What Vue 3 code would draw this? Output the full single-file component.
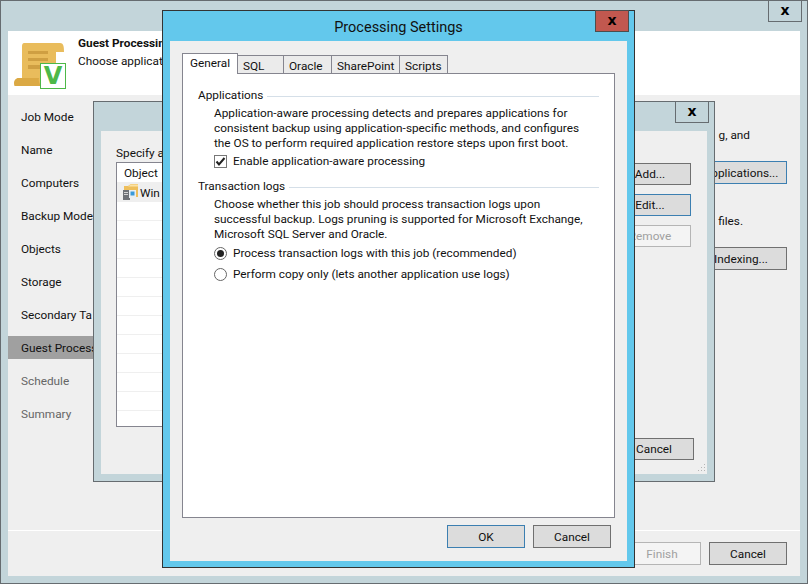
<script setup>
const steps = [
  { label: 'Job Mode' },
  { label: 'Name' },
  { label: 'Computers' },
  { label: 'Backup Mode' },
  { label: 'Objects' },
  { label: 'Storage' },
  { label: 'Secondary Ta' },
  { label: 'Guest Process', active: true },
  { label: 'Schedule', muted: true },
  { label: 'Summary', muted: true }
]
const tabs = [
  { label: 'General', w: 56, active: true },
  { label: 'SQL', w: 46 },
  { label: 'Oracle', w: 48 },
  { label: 'SharePoint', w: 68 },
  { label: 'Scripts', w: 48 }
]
const rows = 13
</script>

<template>
  <div class="desk">
    <div class="win outer">
      <div class="winbar"><span class="x">x</span></div>
      <div class="client">
        <header class="head">
          <div class="logo">
            <svg width="52" height="44" viewBox="0 0 52 44">
              <path d="M10 0H46C50 0 50 5 50 9H42V38C42 41 38 43 34 43H4C0 43 -1 37 4 35H8V3C8 1 9 0 10 0Z" fill="#e9bc5c"/>
              <path d="M0.5 43C-1 39 1 35 5 35H25C24 39 26 42 28 43Z" fill="#dba944"/>
              <path d="M14 8H34V11H14ZM14 15H34V18H14ZM14 22H30V26H14Z" fill="#cf9f42"/>
            </svg>
            <span class="vbadge">V</span>
          </div>
          <div class="headtext">
            <div class="headtitle">Guest Processin</div>
            <div>Choose applicat</div>
          </div>
        </header>
        <div class="mainrow">
          <nav class="nav">
            <div v-for="s in steps" :key="s.label" class="step" :class="{ on: s.active, muted: s.muted }">{{ s.label }}</div>
          </nav>
          <div class="pane">
            <div class="line1">g, and</div>
            <button class="btn focus wide">Applications...</button>
            <div class="line2">files.</div>
            <button class="btn wide">Indexing...</button>
          </div>
        </div>
        <footer class="foot">
          <button class="btn off fw">Finish</button>
          <button class="btn fw">Cancel</button>
        </footer>
      </div>
    </div>

    <div class="win middle">
      <div class="winbar"><span class="x mx">x</span></div>
      <div class="client midclient">
        <div class="midleft">
          <div class="spec">Specify a</div>
          <div class="list">
            <div class="lhead">Object</div>
            <div class="lrow first">
              <svg width="17" height="18" viewBox="0 0 17 18">
                <path d="M2 3H6L9 1H16V14H2Z" fill="#eebf5c"/>
                <path d="M6 3.5L9 1.5H16V3.5Z" fill="#fbe3a6"/>
                <rect x="1" y="7" width="7" height="10" fill="#6f7277"/>
                <rect x="7" y="7" width="7" height="8" fill="#e9eef2"/>
                <rect x="8.5" y="8.5" width="4" height="4" fill="#3a9ad9"/>
                <rect x="2" y="9" width="4" height="1" fill="#d5d5d5"/>
                <rect x="2" y="11" width="4" height="1" fill="#d5d5d5"/>
              </svg>
              <span class="win-label">Win</span>
            </div>
            <div v-for="n in rows" :key="n" class="lrow"></div>
          </div>
        </div>
        <div class="midbtns">
          <button class="btn mb">Add...</button>
          <button class="btn mb focus">Edit...</button>
          <button class="btn mb off">Remove</button>
        </div>
        <button class="btn mcancel">Cancel</button>
        <svg class="grip" width="9" height="9" viewBox="0 0 9 9">
          <path d="M7 0h1v1H7zM4 3h1v1H4zM7 3h1v1H7zM1 6h1v1H1zM4 6h1v1H4zM7 6h1v1H7z" fill="#b5b5b5"/>
        </svg>
      </div>
    </div>

    <div class="win top">
      <div class="topbar">
        <span class="toptitle">Processing Settings</span>
        <span class="x red">x</span>
      </div>
      <div class="topclient">
        <div class="tabs">
          <div v-for="t in tabs" :key="t.label" class="tab" :class="{ act: t.active }" :style="{ width: t.w + 'px' }">{{ t.label }}</div>
        </div>
        <div class="panel">
          <div class="group">Applications<i></i></div>
          <div class="copy">
            <p>Application-aware processing detects and prepares applications for</p>
            <p>consistent backup using application-specific methods, and configures</p>
            <p>the OS to perform required application restore steps upon first boot.</p>
          </div>
          <div class="opt chk">
            <svg class="box" width="13" height="13" viewBox="0 0 13 13">
              <rect x="0.5" y="0.5" width="12" height="12" fill="#fff" stroke="#777"/>
              <path d="M2.5 6.5L5 9.5L10.5 3" fill="none" stroke="#222" stroke-width="2"/>
            </svg>
            Enable application-aware processing
          </div>
          <div class="group g2">Transaction logs<i></i></div>
          <div class="copy c2">
            <p>Choose whether this job should process transaction logs upon</p>
            <p>successful backup. Logs pruning is supported for Microsoft Exchange,</p>
            <p>Microsoft SQL Server and Oracle.</p>
          </div>
          <div class="opt r1"><span class="radio sel"></span>Process transaction logs with this job (recommended)</div>
          <div class="opt r2"><span class="radio"></span>Perform copy only (lets another application use logs)</div>
        </div>
        <div class="topfoot">
          <button class="btn tb focus">OK</button>
          <button class="btn tb">Cancel</button>
        </div>
      </div>
    </div>
  </div>
</template>

<style>
html, body { margin: 0; padding: 0; }
</style>

<style scoped>
.desk {
  position: relative;
  width: 808px;
  height: 584px;
  overflow: hidden;
  font-family: Roboto, "Open Sans", sans-serif;
  font-size: 11.8px;
  color: #111;
}
.win {
  position: absolute;
  box-sizing: border-box;
  display: flex;
  flex-direction: column;
  background: #c3d5da;
  border: 1px solid #666c70;
}
.outer { left: 0; top: 0; width: 808px; height: 584px; padding: 0 7px 7px; }
.middle { left: 93px; top: 101px; width: 622px; height: 381px; padding: 0 7px 7px; }
.top { left: 162px; top: 10px; width: 473px; height: 558px; padding: 0 7px 6px; background: #63c8ec; border-color: #333; }
.winbar { height: 30px; flex: none; position: relative; }
.middle .winbar { height: 29px; }
.x {
  position: absolute;
  top: -1px;
  right: -2px;
  box-sizing: border-box;
  width: 34px;
  height: 22px;
  border: 1px solid #666c70;
  font: bold 14px/19px "DejaVu Sans", sans-serif;
  text-align: center;
  color: #000;
}
.client { flex: 1; display: flex; flex-direction: column; background: #efefef; min-height: 0; }
.head { height: 64px; flex: none; background: #fff; display: flex; }
.logo { position: relative; width: 70px; flex: none; }
.logo svg { position: absolute; left: 6px; top: 12px; }
.vbadge {
  position: absolute;
  left: 32px;
  top: 32px;
  box-sizing: border-box;
  width: 26px;
  height: 26px;
  background: #fff;
  border: 1px solid #4db848;
  color: #4db848;
  font: bold 24px/25px "DejaVu Sans", sans-serif;
  text-align: center;
}
.headtext { padding-top: 3px; line-height: 18px; white-space: nowrap; }
.headtitle { font-weight: 700; }
.mainrow { flex: 1; display: flex; min-height: 0; }
.nav { width: 85px; flex: none; padding-top: 10px; }
.step { height: 23px; line-height: 25px; margin-bottom: 10px; padding-left: 13px; white-space: nowrap; }
.step.on { background: #a0a0a0; }
.step.muted { color: #666; }
.pane { flex: 1; display: flex; flex-direction: column; align-items: flex-end; padding-right: 13px; }
.line1 { margin-top: 31px; height: 18px; line-height: 18px; padding-right: 37px; }
.line2 { margin-top: 28px; height: 18px; line-height: 18px; padding-right: 44px; }
.foot {
  height: 46px;
  flex: none;
  box-sizing: border-box;
  border-top: 1px solid #fff;
  display: flex;
  justify-content: flex-end;
  gap: 8px;
  padding: 11px 13px 0;
}
.btn {
  box-sizing: border-box;
  height: 23px;
  padding: 0;
  border: 1px solid #707070;
  background: #dcdcdc;
  font: inherit;
  color: #111;
  white-space: nowrap;
}
.focus { border-color: #3c7fb1; }
.off { background: #f4f4f4; border-color: #b5b5b5; color: #a0a0a0; }
.wide { width: 96px; margin-top: 17px; padding-left: 4px; }
.fw { width: 78px; }
.midclient { position: relative; flex-direction: row; }
.midleft { flex: 1; padding: 12px 0 0 15px; min-width: 0; }
.spec { height: 19px; line-height: 21px; white-space: nowrap; }
.list { width: 470px; height: 265px; box-sizing: border-box; border: 1px solid #85858f; background: #fff; overflow: hidden; }
.lhead { height: 19px; line-height: 21px; padding-left: 7px; background: #fff; }
.lrow { height: 19px; box-sizing: border-box; border-bottom: 1px solid #efefef; display: flex; align-items: center; gap: 1px; }
.lrow.first { height: 20px; background: #efefef; padding-left: 5px; }
.win-label { padding-top: 2px; }
.midbtns { width: 82px; flex: none; display: flex; flex-direction: column; gap: 9px; padding: 32px 16px 0 0; }
.mb { width: 82px; height: 22px; }
.mcancel { position: absolute; right: 13px; bottom: 14px; width: 80px; height: 22px; }
.grip { position: absolute; right: 1px; bottom: 1px; }
.topbar { height: 30px; flex: none; position: relative; text-align: center; }
.toptitle { font-size: 14.5px; line-height: 33px; color: #111; }
.red { background: #c1584f; border-color: #4d4d4d; }
.topclient { flex: 1; display: flex; flex-direction: column; background: #efefef; padding: 12px 12px 0; min-height: 0; }
.tabs { display: flex; align-items: flex-end; height: 20px; flex: none; position: relative; z-index: 1; }
.tab {
  box-sizing: border-box;
  height: 18px;
  border: 1px solid #85858f;
  border-bottom: none;
  border-left-width: 0;
  background: #ebebeb;
  padding-left: 5px;
  line-height: 20px;
  white-space: nowrap;
}
.tab.act {
  height: 21px;
  margin-bottom: -1px;
  border-left-width: 1px;
  background: #fff;
  padding-left: 7px;
  line-height: 19px;
}
.panel {
  flex: 1;
  box-sizing: border-box;
  background: #fff;
  border: 1px solid #85858f;
  padding: 14px 15px 0;
  min-height: 0;
}
.group { display: flex; align-items: flex-start; gap: 4px; height: 16px; line-height: 14px; white-space: nowrap; }
.group i { flex: 1; height: 1px; margin-top: 8px; background: #d5dfe8; }
.g2 { margin-top: 10px; }
.copy { padding-left: 16px; margin-top: 2px; }
.copy.c2 { margin-top: 2px; }
.copy p { margin: 0; height: 15px; line-height: 15px; white-space: nowrap; }
.opt { display: flex; align-items: center; padding-left: 16px; height: 16px; white-space: nowrap; }
.box { margin-right: 6px; }
.chk { margin-top: 2px; }
.r1 { margin-top: 3px; }
.r2 { margin-top: 5px; }
.radio {
  box-sizing: border-box;
  width: 13px;
  height: 13px;
  margin-right: 6px;
  border: 1px solid #666;
  border-radius: 50%;
  background: #fff;
  position: relative;
}
.radio.sel::after {
  content: "";
  position: absolute;
  left: 2px;
  top: 2px;
  width: 7px;
  height: 7px;
  border-radius: 50%;
  background: #222;
}
.topfoot { height: 43px; flex: none; display: flex; justify-content: flex-end; gap: 8px; padding: 7px 4px 0 0; box-sizing: border-box; }
.tb { width: 78px; }
</style>
